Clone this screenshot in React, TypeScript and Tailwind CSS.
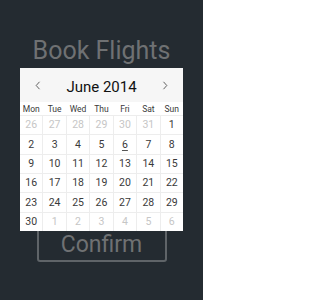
import React from 'react';

const weekdays = ['Mon', 'Tue', 'Wed', 'Thu', 'Fri', 'Sat', 'Sun'];

type Day = { n: number; muted?: boolean; today?: boolean };

// June 2014, weeks start on Monday
const days: Day[] = [
  ...[26, 27, 28, 29, 30, 31].map((n) => ({ n, muted: true })),
  ...Array.from({ length: 30 }, (_, i) => ({ n: i + 1, today: i + 1 === 6 })),
  ...[1, 2, 3, 4, 5, 6].map((n) => ({ n, muted: true })),
];

function Chevron({ dir }: { dir: 'left' | 'right' }) {
  return (
    <svg width="6" height="9" viewBox="0 0 6 9" fill="none" className="block">
      <polyline
        points={dir === 'left' ? '4.5,0.8 1.2,4.5 4.5,8.2' : '1.5,0.8 4.8,4.5 1.5,8.2'}
        stroke="#3c3c3c"
        strokeWidth="0.8"
      />
    </svg>
  );
}

function Calendar() {
  return (
    <div className="absolute left-[20px] top-[68px] w-[163px] bg-white">
      <div className="flex h-[34px] items-center justify-between bg-[#f6f6f6] px-[15px]">
        <Chevron dir="left" />
        <span className="pt-[3px] text-[15px] leading-[20px] text-[#111]">June 2014</span>
        <Chevron dir="right" />
      </div>
      <div className="grid h-[13px] grid-cols-7 gap-x-px">
        {weekdays.map((d) => (
          <span key={d} className="pt-[2px] text-center text-[8.5px] leading-[11px] text-[#3a3a3a]">
            {d}
          </span>
        ))}
      </div>
      <div className="grid h-[116px] grid-cols-7 grid-rows-6 gap-px bg-[#ededed] pt-px">
        {days.map((d, i) => (
          <div key={i} className="flex items-center justify-center bg-white">
            <span
              className={
                d.muted
                  ? 'text-[10.5px] text-[#c6c6c6]'
                  : d.today
                    ? 'text-[10.5px] text-[#3a3a3a] underline decoration-[#555] underline-offset-[2px]'
                    : 'text-[10.5px] text-[#3a3a3a]'
              }
            >
              {d.n}
            </span>
          </div>
        ))}
      </div>
    </div>
  );
}

export default function App() {
  return (
    <div
      className="relative flex h-[300px] w-[203px] flex-col items-center bg-[#242b31] pt-[36px]"
      style={{ fontFamily: 'Roboto, "Liberation Sans", sans-serif' }}
    >
      <h1 className="text-[25px] leading-[30px] text-[#6f7173]">Book Flights</h1>
      <button
        type="button"
        className="mt-[162px] h-[34px] w-[130px] rounded-[3px] border-2 border-[#5f6468] text-[23px] leading-[30px] text-[#6f7173]"
      >
        Confirm
      </button>
      <Calendar />
    </div>
  );
}
